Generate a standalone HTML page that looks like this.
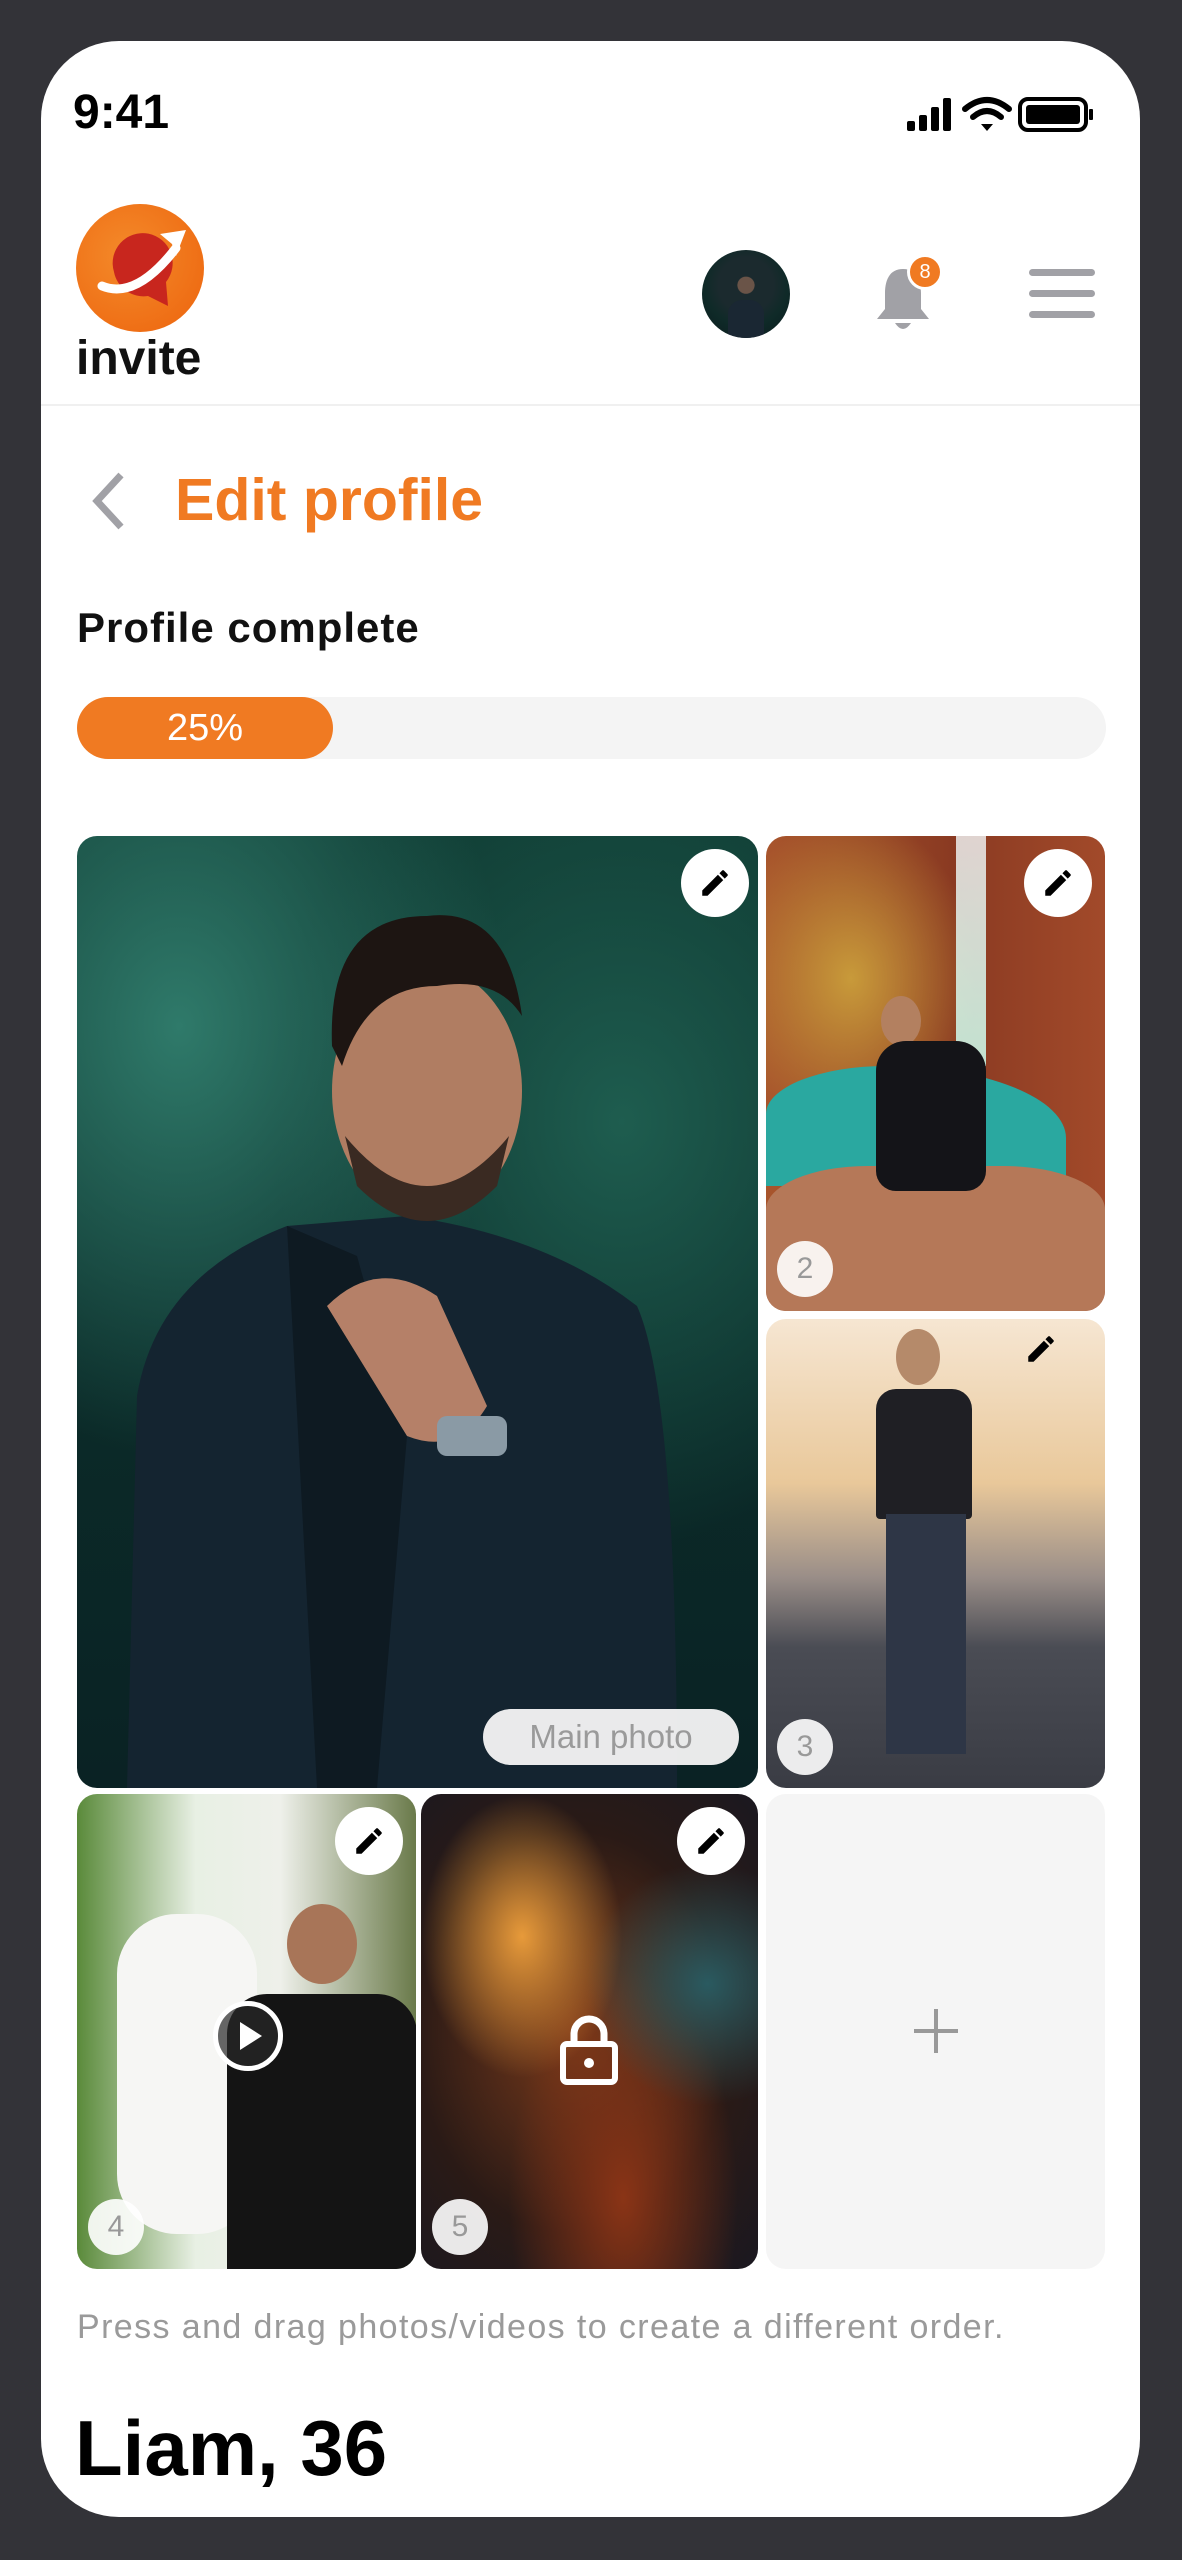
<!DOCTYPE html>
<html><head><meta charset="utf-8"><style>
*{margin:0;padding:0;box-sizing:border-box}
body{width:1182px;height:2560px;background:#333338;position:relative;overflow:hidden;font-family:"Liberation Sans",sans-serif}
.scr{position:absolute;left:41px;top:41px;width:1099px;height:2476px;background:#fff;border-radius:78px;overflow:hidden}
.a{position:absolute}
.ph{position:absolute;border-radius:20px;overflow:hidden}
.ed{position:absolute;width:68px;height:68px;border-radius:50%;background:#fff;display:flex;align-items:center;justify-content:center}
.num{position:absolute;width:56px;height:56px;border-radius:50%;background:rgba(255,255,255,.9);color:#999;font-size:30px;display:flex;align-items:center;justify-content:center}
</style></head><body>
<div class="scr">
 <div class="a" style="left:32px;top:44px;font-size:48px;font-weight:700;color:#000">9:41</div>
 <svg class="a" style="left:866px;top:54px" width="190" height="40" viewBox="0 0 190 40">
  <rect x="0" y="26" width="8" height="10" rx="2"/><rect x="12" y="20" width="8" height="16" rx="2"/><rect x="24" y="12" width="8" height="24" rx="2"/><rect x="36" y="3" width="8" height="33" rx="2"/>
  <path d="M58 14 Q80 -4 102 14" stroke="#000" stroke-width="6" fill="none" stroke-linecap="round"/><path d="M66 22 Q80 10 94 22" stroke="#000" stroke-width="6" fill="none" stroke-linecap="round"/><path d="M74 29 L80 36 L86 29 Z"/>
  <rect x="113" y="4" width="66" height="31" rx="8" fill="none" stroke="#000" stroke-width="4"/><rect x="119" y="10" width="54" height="19" rx="3"/><rect x="182" y="14" width="4" height="11" rx="1"/>
 </svg>
 <!-- logo -->
 <svg class="a" style="left:35px;top:163px" width="128" height="128" viewBox="0 0 128 128">
  <defs><radialGradient id="lg" cx=".4" cy=".4" r=".7"><stop offset="0" stop-color="#F48A2A"/><stop offset="1" stop-color="#EE6A12"/></radialGradient></defs>
  <circle cx="64" cy="64" r="64" fill="url(#lg)"/>
  <path d="M38 68 A30 30 0 1 1 90 78 L92 102 L72 92 A30 30 0 0 1 38 68Z" fill="#C8261E"/>
  <path d="M26 82 Q60 96 100 44" stroke="#fff" stroke-width="9" fill="none" stroke-linecap="round"/>
  <path d="M84 30 L110 26 L100 52 L96 40 Z" fill="#fff"/>
 </svg>
 <div class="a" style="left:35px;top:294px;font-size:48px;font-weight:900;color:#111;line-height:1">invite</div>
 <!-- avatar -->
 <div class="a" style="left:661px;top:209px;width:88px;height:88px;border-radius:50%;background:radial-gradient(circle at 50% 40%,#6a5448 0 12%,#1b2a2e 13% 40%,#0f2a28 60%,#0b1a1c);overflow:hidden">
  <div class="a" style="left:26px;top:50px;width:36px;height:40px;border-radius:14px 14px 0 0;background:#1a2733"></div>
 </div>
 <!-- bell -->
 <svg class="a" style="left:832px;top:218px" width="64" height="76" viewBox="0 0 64 76">
  <path d="M30 10 C16 10 12 22 12 34 L12 50 L4 60 L56 60 L48 50 L48 34 C48 22 44 10 30 10Z" fill="#A1A1A6"/>
  <path d="M22 64 Q30 76 38 64Z" fill="#A1A1A6"/>
 </svg>
 <div class="a" style="left:866px;top:213px;width:36px;height:36px;border-radius:50%;background:#F07A22;border:3px solid #fff;color:#fff;font-size:20px;display:flex;align-items:center;justify-content:center">8</div>
 <div class="a" style="left:988px;top:228px;width:66px;height:7px;border-radius:4px;background:#A1A1A6"></div>
 <div class="a" style="left:988px;top:249px;width:66px;height:7px;border-radius:4px;background:#A1A1A6"></div>
 <div class="a" style="left:988px;top:270px;width:66px;height:7px;border-radius:4px;background:#A1A1A6"></div>
 <div class="a" style="left:0;top:363px;width:1099px;height:2px;background:#f0f0f0"></div>
 <!-- title -->
 <svg class="a" style="left:48px;top:430px" width="40" height="60" viewBox="0 0 40 60"><path d="M32 4 L8 30 L32 56" stroke="#A1A1A6" stroke-width="7" fill="none"/></svg>
 <div class="a" style="left:134px;top:425px;font-size:59px;font-weight:700;color:#F07A22">Edit profile</div>
 <div class="a" style="left:36px;top:563px;font-size:42px;font-weight:700;color:#111;letter-spacing:1px">Profile complete</div>
 <div class="a" style="left:36px;top:656px;width:1029px;height:62px;border-radius:31px;background:#f4f4f4"></div>
 <div class="a" style="left:36px;top:656px;width:256px;height:62px;border-radius:31px;background:#F07A22;color:#fff;font-size:38px;display:flex;align-items:center;justify-content:center">25%</div>
 <!-- main photo -->
 <div class="ph" style="left:36px;top:795px;width:681px;height:952px;background:radial-gradient(ellipse at 15% 20%,#2f7a6a,transparent 40%),radial-gradient(ellipse at 80% 30%,#1e5d4f,transparent 45%),linear-gradient(#0f3a32,#0b2a28 60%,#0a2224)">
  <svg class="a" style="left:0;top:0" width="681" height="952" viewBox="0 0 681 952">
   <path d="M50 952 L60 560 Q80 440 210 390 L330 380 Q470 400 560 470 Q600 560 600 952Z" fill="#142430"/>
   <path d="M210 390 L280 420 L330 600 L300 952 L240 952Z" fill="#0e1a22"/>
   <ellipse cx="350" cy="255" rx="95" ry="125" fill="#b07d62"/>
   <path d="M255 210 Q250 80 350 80 Q430 70 445 180 Q420 140 360 150 Q290 150 265 230Z" fill="#1d1512"/>
   <path d="M268 300 Q350 400 432 300 L420 350 Q350 420 280 350Z" fill="#3a2a22"/>
   <path d="M250 470 Q300 420 360 460 L410 570 Q380 620 330 600 Z" fill="#b58068"/>
   <rect x="360" y="580" width="70" height="40" rx="10" fill="#8a9aa5"/>
  </svg>
  <div class="ed" style="left:604px;top:13px"><svg width="34" height="34" viewBox="0 0 24 24"><path d="M3 17.25V21h3.75L17.81 9.94l-3.75-3.75L3 17.25zM20.71 7.04a1 1 0 0 0 0-1.41l-2.34-2.34a1 1 0 0 0-1.41 0l-1.83 1.83 3.75 3.75 1.83-1.83z"/></svg></div>
  <div class="a" style="left:406px;top:873px;width:256px;height:56px;border-radius:28px;background:rgba(245,245,245,.95);color:#9a9a9a;font-size:33px;display:flex;align-items:center;justify-content:center">Main photo</div>
 </div>
 <!-- photo 2 -->
 <div class="ph" style="left:725px;top:795px;width:339px;height:475px;background:radial-gradient(ellipse at 25% 30%,#c89a3a,transparent 35%),linear-gradient(90deg,#a8552c,#8a3a22 55%,#a24a2a);">
  <div class="a" style="left:190px;top:0;width:30px;height:230px;background:linear-gradient(#eee,#cfe);opacity:.85"></div>
  <div class="a" style="left:0;top:230px;width:300px;height:120px;background:#2aa8a0;border-radius:40% 60% 0 0"></div>
  <div class="a" style="left:0;top:330px;width:339px;height:145px;background:#b57858;border-radius:30% 30% 0 0"></div>
  <div class="a" style="left:115px;top:160px;width:40px;height:50px;border-radius:50%;background:#b38060"></div>
  <div class="a" style="left:110px;top:205px;width:110px;height:150px;background:#141418;border-radius:30px 30px 20px 20px"></div>
  <div class="ed" style="left:258px;top:13px"><svg width="34" height="34" viewBox="0 0 24 24"><path d="M3 17.25V21h3.75L17.81 9.94l-3.75-3.75L3 17.25zM20.71 7.04a1 1 0 0 0 0-1.41l-2.34-2.34a1 1 0 0 0-1.41 0l-1.83 1.83 3.75 3.75 1.83-1.83z"/></svg></div>
  <div class="num" style="left:11px;top:405px">2</div>
 </div>
 <!-- photo 3 -->
 <div class="ph" style="left:725px;top:1278px;width:339px;height:469px;background:linear-gradient(#f6e6d2,#e9c89a 35%,#9a8e88 55%,#4a4c54 70%,#3a3c44);">
  <div class="a" style="left:130px;top:10px;width:44px;height:56px;border-radius:50%;background:#b58a6a"></div>
  <div class="a" style="left:110px;top:70px;width:96px;height:130px;background:#1f1f24;border-radius:20px 20px 4px 4px"></div>
  <div class="a" style="left:120px;top:195px;width:80px;height:240px;background:#2e3646"></div>
  <div class="a" style="left:258px;top:13px"><svg width="34" height="34" viewBox="0 0 24 24"><path d="M3 17.25V21h3.75L17.81 9.94l-3.75-3.75L3 17.25zM20.71 7.04a1 1 0 0 0 0-1.41l-2.34-2.34a1 1 0 0 0-1.41 0l-1.83 1.83 3.75 3.75 1.83-1.83z"/></svg></div>
  <div class="num" style="left:11px;top:400px">3</div>
 </div>
 <!-- photo 4 -->
 <div class="ph" style="left:36px;top:1753px;width:339px;height:475px;background:linear-gradient(90deg,#5a8a3a,#e8f0e4 35%,#eef0ea 60%,#6a7a4a);">
  <div class="a" style="left:40px;top:120px;width:140px;height:320px;background:#f6f6f4;border-radius:60px"></div>
  <div class="a" style="left:210px;top:110px;width:70px;height:80px;border-radius:50%;background:#a87558"></div>
  <div class="a" style="left:150px;top:200px;width:190px;height:275px;background:#141414;border-radius:40px 40px 0 0"></div>
  <div class="a" style="left:136px;top:207px;width:70px;height:70px;border-radius:50%;border:5px solid #fff;background:rgba(40,40,40,.7);display:flex;align-items:center;justify-content:center"><div style="width:0;height:0;border-left:22px solid #fff;border-top:14px solid transparent;border-bottom:14px solid transparent;margin-left:6px"></div></div>
  <div class="ed" style="left:258px;top:13px"><svg width="34" height="34" viewBox="0 0 24 24"><path d="M3 17.25V21h3.75L17.81 9.94l-3.75-3.75L3 17.25zM20.71 7.04a1 1 0 0 0 0-1.41l-2.34-2.34a1 1 0 0 0-1.41 0l-1.83 1.83 3.75 3.75 1.83-1.83z"/></svg></div>
  <div class="num" style="left:11px;top:405px">4</div>
 </div>
 <!-- photo 5 -->
 <div class="ph" style="left:380px;top:1753px;width:337px;height:475px;background:radial-gradient(ellipse at 30% 30%,#e79a3a,transparent 30%),radial-gradient(ellipse at 85% 40%,#2a5a60,transparent 30%),radial-gradient(ellipse at 60% 85%,#8a3416,transparent 40%),radial-gradient(ellipse at 45% 50%,#7a3a1a,#2a1a16 60%,#1a1820)">
  <svg class="a" style="left:137px;top:220px" width="62" height="72" viewBox="0 0 62 72"><path d="M16 30 V20 A15 15 0 0 1 46 20 V30" stroke="#fff" stroke-width="7" fill="none"/><rect x="5" y="30" width="52" height="38" rx="4" fill="none" stroke="#fff" stroke-width="6"/><circle cx="31" cy="49" r="5" fill="#fff"/></svg>
  <div class="ed" style="left:256px;top:13px"><svg width="34" height="34" viewBox="0 0 24 24"><path d="M3 17.25V21h3.75L17.81 9.94l-3.75-3.75L3 17.25zM20.71 7.04a1 1 0 0 0 0-1.41l-2.34-2.34a1 1 0 0 0-1.41 0l-1.83 1.83 3.75 3.75 1.83-1.83z"/></svg></div>
  <div class="num" style="left:11px;top:405px">5</div>
 </div>
 <!-- add -->
 <div class="ph" style="left:725px;top:1753px;width:339px;height:475px;background:#f5f5f5">
  <div class="a" style="left:148px;top:235px;width:44px;height:4px;background:#999"></div>
  <div class="a" style="left:168px;top:215px;width:4px;height:44px;background:#999"></div>
 </div>
 <div class="a" style="left:36px;top:2267px;font-size:34px;color:#9a9a9a;letter-spacing:1.4px">Press and drag photos/videos to create a different order.</div>
 <div class="a" style="left:34px;top:2362px;font-size:78px;font-weight:700;color:#000">Liam, 36</div>
</div>
</body></html>
